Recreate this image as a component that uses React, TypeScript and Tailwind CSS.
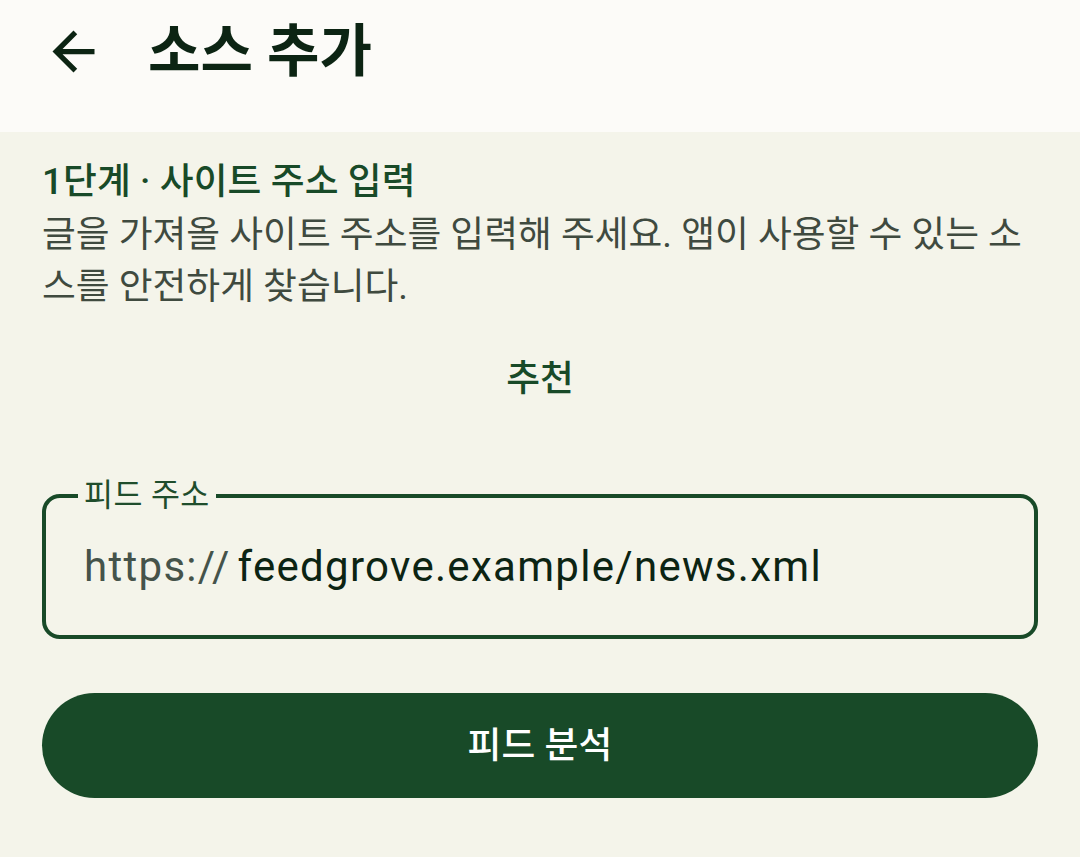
import { useState } from "react";

const FONT = "font-['Roboto','Noto_Sans_CJK_KR',sans-serif]";

export default function App() {
  const [url, setUrl] = useState("feedgrove.example/news.xml");

  return (
    <div className={`${FONT} min-h-[857px] w-[1080px] bg-[#f4f4ea]`}>
      <header className="h-[132px] bg-[#fcfbf8] pl-[42px] pt-[20px]">
        <div className="flex h-[63px] items-center gap-[43px]">
          <button className="grid size-[63px] place-items-center text-[#0c2413]">
            <svg viewBox="0 0 24 24" className="size-[63px]" fill="currentColor">
              <path d="M20 11H7.83l5.59-5.59L12 4l-8 8 8 8 1.41-1.41L7.83 13H20v-2z" />
            </svg>
          </button>
          <h1 className="text-[57px] font-bold leading-[63px] text-[#0c2413]">소스 추가</h1>
        </div>
      </header>

      <main className="flex flex-col px-[42px] pt-[24px]">
        <p className="text-[36.75px] font-medium leading-[52.5px] tracking-[0.1px] text-[#184a28]">
          1단계 · 사이트 주소 입력
        </p>
        <p className="text-[36.75px] leading-[52.5px] text-[#3f4a3f]">
          글을 가져올 사이트 주소를 입력해 주세요. 앱이 사용할 수 있는 소스를 안전하게 찾습니다.
        </p>

        <p className="mt-[39px] text-center text-[36.75px] font-medium leading-[52.5px] text-[#184a28]">추천</p>

        <div className="relative mt-[89px] flex h-[145px] items-center rounded-[18px] border-[4px] border-[#184a28] px-[38px]">
          <span className="absolute -top-[18px] left-[32px] bg-[#f4f4ea] px-[6px] text-[31.5px] leading-[31.5px] tracking-[0.4px] text-[#1f4d2c]">
            피드 주소
          </span>
          <div className="flex w-full items-center text-[42px] leading-[49px] tracking-[1.3px]">
            <span className="text-[#45534a]">https://</span>
            <input
              value={url}
              onChange={(e) => setUrl(e.target.value)}
              className="ml-[7px] w-full bg-transparent text-[#0c2413] outline-none"
            />
          </div>
        </div>

        <button className="mt-[54px] h-[105px] w-full rounded-full bg-[#184a28] text-[36.75px] font-medium tracking-[0.1px] text-white">
          피드 분석
        </button>
      </main>
    </div>
  );
}
